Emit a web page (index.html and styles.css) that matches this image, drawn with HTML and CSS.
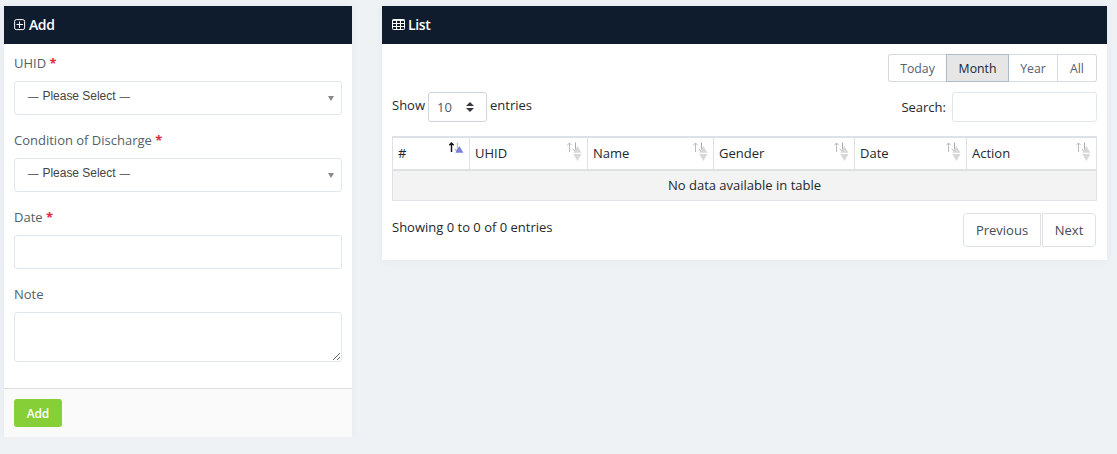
FILE: index.html
```html
<!DOCTYPE html>
<html lang="en">
<head>
<meta charset="utf-8">
<title>Discharge</title>
<link rel="stylesheet" href="styles.css">
</head>
<body>
<svg class="defs" width="0" height="0">
  <symbol id="sort" viewBox="0 0 20 20">
    <path class="arrow-down" d="M9.500 1.500v9M6.800 8l2.700 2.700L12.200 8" fill="none"/>
    <path class="tri-up" d="M7.300 11.700L11.400 5l4 6.700z"/>
    <path class="tri-down" d="M7.300 13h8.200l-4.100 7z"/>
    <path class="arrow-up" d="M3.500 11V2M1.300 4.200l2.200-2.200 2.200 2.200" fill="none"/>
  </symbol>
</svg>
<main class="page">
  <section class="card form-card">
    <h2 class="card-header"><svg class="icon-plus" width="12" height="12" viewBox="0 0 12 12"><rect x=".6" y=".6" width="10" height="10" rx="1.800"/><path d="M5.500 2.500v6.500M2.500 5.500h6.500"/></svg>Add</h2>
    <div class="card-body">
      <div class="group"><label class="label">UHID <b class="req">*</b></label><div class="control picker"><span class="choice"><span class="dash">—</span> Please Select <span class="dash">—</span></span><i class="caret"></i></div></div>
      <div class="group"><label class="label">Condition of Discharge <b class="req">*</b></label><div class="control picker"><span class="choice"><span class="dash">—</span> Please Select <span class="dash">—</span></span><i class="caret"></i></div></div>
      <div class="group"><label class="label">Date <b class="req">*</b></label><input class="control" type="text"></div>
      <div class="group"><label class="label">Note</label><textarea class="control note"></textarea></div>
    </div>
    <div class="card-footer"><button class="btn-add">Add</button></div>
  </section>

  <section class="card list-card">
    <h2 class="card-header"><svg class="icon-table" width="14" height="12" viewBox="0 0 14 12"><rect x=".5" y=".5" width="12" height="10" rx="1"/><path d="M.5 1.200h12" stroke-width="1.400"/><path d="M.5 4.500h12M.5 7.500h12M4.500 1v10M8.500 1v10"/></svg>List</h2>
    <div class="list-body">
      <div class="range"><button>Today</button><button class="active">Month</button><button>Year</button><button>All</button></div>
      <div class="tools">
        <div class="length">Show <span class="length-select">10<svg width="8" height="10" viewBox="0 0 8 10"><path d="M0 4l4-4 4 4zM0 6h8l-4 4z"/></svg></span> entries</div>
        <label class="search">Search:<input type="text"></label>
      </div>
      <table class="table">
        <colgroup><col class="c1"><col class="c2"><col class="c3"><col class="c4"><col class="c5"><col class="c6"></colgroup>
        <thead><tr>
          <th>#<svg class="sort asc"><use href="#sort"/></svg></th>
          <th>UHID<svg class="sort"><use href="#sort"/></svg></th>
          <th>Name<svg class="sort"><use href="#sort"/></svg></th>
          <th>Gender<svg class="sort"><use href="#sort"/></svg></th>
          <th>Date<svg class="sort"><use href="#sort"/></svg></th>
          <th>Action<svg class="sort"><use href="#sort"/></svg></th>
        </tr></thead>
        <tbody><tr><td colspan="6">No data available in table</td></tr></tbody>
      </table>
      <div class="list-footer">
        <div>Showing 0 to 0 of 0 entries</div>
        <div class="pager"><button class="prev">Previous</button><button class="next">Next</button></div>
      </div>
    </div>
  </section>
</main>
</body>
</html>
```
FILE: styles.css
```css
* { box-sizing: border-box; }
body {
  margin: 0;
  background: #eef2f5;
  color: #23282c;
  font: 13px/20px "Open Sans", sans-serif;
}
button, input, textarea { font: inherit; margin: 0; outline: 0; }
.defs { display: block; height: 0; }
.page {
  display: flex;
  align-items: flex-start;
  gap: 30px;
  padding: 6px 10px 0 4px;
}
.card { background: #fff; box-shadow: 0 1px 8px rgba(60, 60, 120, .05); }
.form-card { width: 348px; }
.list-card { width: 725px; }
.card-header {
  display: flex;
  align-items: center;
  height: 38px;
  margin: 0;
  padding: 0 10px;
  background: #0f1c2d;
  color: #fff;
  font-size: 14px;
  font-weight: 600;
  letter-spacing: -.4px;
}
.card-header svg { fill: none; stroke: #fff; stroke-width: 1; margin-right: 3px; }
.list-card .card-header svg { margin-right: 2px; }
.card-body { padding: 9px 10px 26px; }
.group { display: flex; flex-direction: column; }
.group + .group { margin-top: 15px; }
.label { height: 21px; margin-bottom: 7px; color: #525f6b; }
.req { color: #e3263c; font-weight: 700; }
.control {
  height: 34px;
  width: 100%;
  border: 1px solid #e1e6eb;
  border-radius: 3px;
  background: #fff;
}
.picker {
  display: flex;
  justify-content: space-between;
  padding: 4px 7px 0 13px;
  color: #444;
  font: 12px/20px "Liberation Sans", sans-serif;
}
.choice { display: flex; gap: 4px; letter-spacing: -.03px; }
.dash { font-size: 10.500px; }
.caret {
  align-self: center;
  margin-top: -3px;
  border: solid transparent;
  border-width: 5px 3px 0;
  border-top-color: #888;
}
.note { display: block; height: 50px; resize: vertical; }
.card-footer {
  height: 49px;
  padding: 10px;
  border-top: 1px solid #dcdde0;
  background: #fafafa;
}
.btn-add {
  display: block;
  width: 48px;
  height: 28px;
  padding: 1px 0 0;
  border: 0;
  border-radius: 3px;
  background: #86cf36;
  color: #fff;
  font-size: 12px;
  font-weight: 600;
  letter-spacing: -.2px;
}
.list-body { padding: 10px 10px 13px; }
.range { display: flex; justify-content: flex-end; }
.range button {
  height: 28px;
  padding: 2px 0 0;
  border: 1px solid #d5dbe2;
  border-left-width: 0;
  background: #fff;
  color: #536170;
  font-size: 12.250px;
}
.range button:nth-child(1) { width: 58px; border-left-width: 1px; border-right: 0; border-radius: 3px 0 0 3px; }
.range button:nth-child(2) { width: 63px; border-left-width: 1px; }
.range button:nth-child(3) { width: 49px; }
.range button:nth-child(4) { width: 39px; border-radius: 0 3px 3px 0; }
.range .active { border-color: #aebbc8; background: #e6e6e6; color: #152536; }
.tools { display: flex; justify-content: space-between; height: 30px; margin-top: 10px; }
.length { display: flex; line-height: 27px; }
.length-select {
  display: flex;
  align-items: center;
  justify-content: space-between;
  width: 59px;
  height: 30px;
  margin: 0 3px;
  padding: 0 12px 0 8px;
  border: 1px solid #ced4e0;
  border-radius: 3px;
  color: #525b65;
}
.length-select svg { fill: #343a40; }
.search { display: flex; align-items: center; gap: 6px; }
.search input { width: 145px; height: 30px; padding: 0 8px; border: 1px solid #e1e6eb; border-radius: 3px; }
.table {
  width: 705px;
  margin-top: 14px;
  border-collapse: separate;
  border-spacing: 0;
  table-layout: fixed;
}
.c1 { width: 78px; }
.c2 { width: 118px; }
.c3 { width: 126px; }
.c4 { width: 141px; }
.c5 { width: 112px; }
.c6 { width: 130px; }
th {
  position: relative;
  height: 35px;
  padding: 0 5px 2px;
  border: solid #dee2e6;
  border-width: 2px 1px 2px 0;
  font-weight: 400;
  text-align: left;
}
th:first-child { border-left-width: 1px; }
td {
  height: 30px;
  padding: 0 0 2px;
  border: solid #dee2e6;
  border-width: 0 1px 1px;
  background: #f3f3f3;
  text-align: center;
}
.sort {
  position: absolute;
  top: 3px;
  right: 1px;
  width: 20px;
  height: 20px;
  stroke-width: 1;
  --up: #bbb;
  --down: #aaa;
  --tri: #d8d8d8;
  --tri-down: #d8d8d8;
}
.asc { --up: #111; --down: #c4c4c4; --tri: #7880dc; --tri-down: transparent; }
.arrow-up { stroke: var(--up); }
.asc { stroke-width: 1.400; }
.arrow-down { stroke: var(--down); }
.tri-up { fill: var(--tri); stroke: none; }
.tri-down { fill: var(--tri-down); stroke: none; }
.list-footer { display: flex; justify-content: space-between; padding: 12px 1px 0 0; line-height: 29px; }
.pager { display: flex; gap: 1px; }
.pager button { height: 34px; padding: 0; border: 1px solid #dee2e6; background: #fff; color: #434c57; }
.prev { width: 78px; border-radius: 4px 0 0 4px; }
.next { width: 54px; border-radius: 0 4px 4px 0; }
```
